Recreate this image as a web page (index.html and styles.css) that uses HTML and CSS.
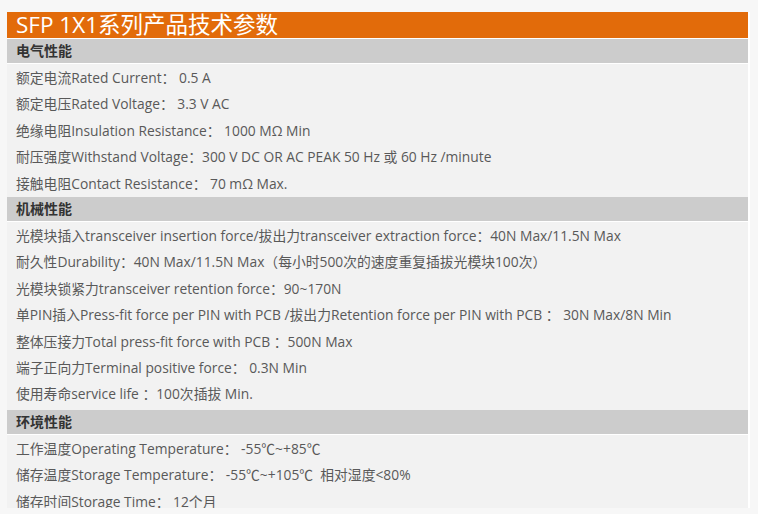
FILE: index.html
```html
<!DOCTYPE html>
<html lang="zh">
<head>
<meta charset="utf-8">
<title>SFP 1X1系列产品技术参数</title>
<link rel="stylesheet" href="styles.css">
</head>
<body>
<div class="panel">
  <h1 class="title">SFP 1X1系列产品技术参数</h1>
  <section class="group">
    <h2 class="group-head">电气性能</h2>
    <div class="group-body">
      <p>额定电流Rated Current： 0.5 A</p>
      <p>额定电压Rated Voltage： 3.3 V AC</p>
      <p>绝缘电阻Insulation Resistance： 1000 MΩ Min</p>
      <p>耐压强度Withstand Voltage：300 V DC OR AC PEAK 50 Hz 或 60 Hz /minute</p>
      <p>接触电阻Contact Resistance： 70 mΩ Max.</p>
    </div>
  </section>
  <section class="group">
    <h2 class="group-head">机械性能</h2>
    <div class="group-body tall">
      <p>光模块插入transceiver insertion force/拔出力transceiver extraction force：40N Max/11.5N Max</p>
      <p>耐久性Durability：40N Max/11.5N Max（每小时500次的速度重复插拔光模块100次）</p>
      <p>光模块锁紧力transceiver retention force：90~170N</p>
      <p>单PIN插入Press-fit force per PIN with PCB /拔出力Retention force per PIN with PCB ： 30N Max/8N Min</p>
      <p>整体压接力Total press-fit force with PCB ：500N Max</p>
      <p>端子正向力Terminal positive force： 0.3N Min</p>
      <p>使用寿命service life ：100次插拔 Min.</p>
    </div>
  </section>
  <section class="group">
    <h2 class="group-head">环境性能</h2>
    <div class="group-body last">
      <p>工作温度Operating Temperature： -55℃~+85℃</p>
      <p>储存温度Storage Temperature： -55℃~+105℃ &nbsp;相对湿度&lt;80%</p>
      <p>储存时间Storage Time： 12个月</p>
    </div>
  </section>
</div>
</body>
</html>
```

FILE: styles.css
```css
html, body {
  margin: 0;
  padding: 0;
  background: #f7f7f7;
  height: 100%;
  overflow: hidden;
}

body {
  font-family: "Open Sans", "Noto Sans CJK SC", sans-serif;
  color: #595959;
}

.panel {
  margin: 12px 0 0 7px;
  width: 741px;
  border-right: 2px solid #ffffff;
  display: flex;
  flex-direction: column;
}

.title {
  margin: 0;
  height: 26px;
  background: #e26b0a;
  color: #ffffff;
  font-size: 22.5px;
  font-weight: normal;
  line-height: 26px;
  padding-left: 9px;
  border-bottom: 1px solid #ffffff;
}

.group {
  display: flex;
  flex-direction: column;
}

.group-head {
  margin: 0;
  height: 24px;
  line-height: 24px;
  background: #cccccc;
  color: #333333;
  font-size: 14px;
  font-weight: bold;
  padding-left: 9px;
  border-bottom: 1px solid #ffffff;
}

.group-body {
  background: #f2f2f2;
  padding: 1px 0 0 9px;
  height: 132px;
}

.group-body.tall {
  height: 187px;
}

.group-body.last {
  height: 72px;
  overflow: hidden;
}

.group-body p {
  margin: 0;
  font-size: 13.8px;
  line-height: 26.4px;
  white-space: nowrap;
}
```
